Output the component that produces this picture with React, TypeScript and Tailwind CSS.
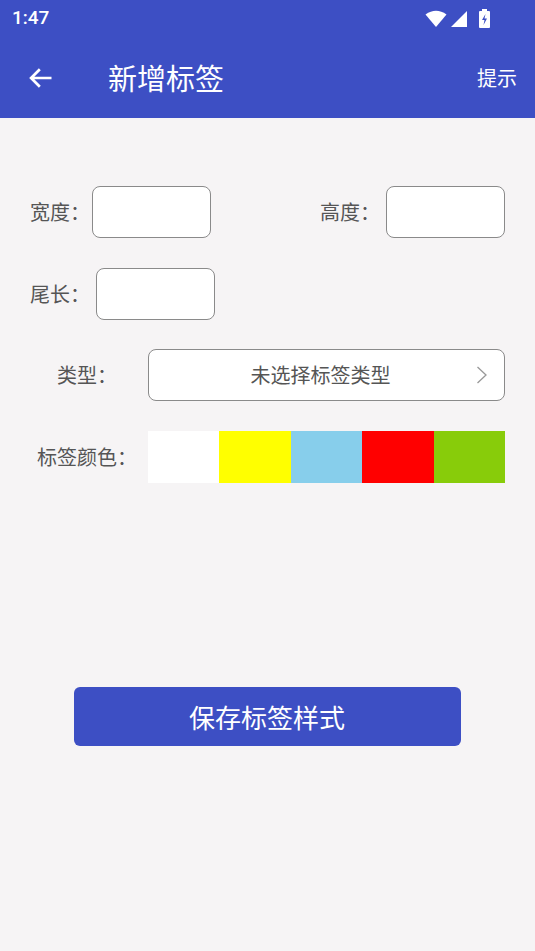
import React from "react";

const FONT = { fontFamily: '"Noto Sans CJK SC", "Noto Sans", Roboto, sans-serif' };

const swatches = ["#ffffff", "#ffff00", "#87ceeb", "#ff0000", "#88cc0a"];

function StatusBar() {
  return (
    <div className="h-[37px] flex items-center justify-between pl-[12px] pr-[40px]">
      <span className="text-white text-[19px] font-medium" style={{ fontFamily: "Roboto, sans-serif" }}>
        1:47
      </span>
      <div className="flex items-center gap-[3px]">
        <svg width="22" height="18" viewBox="0 0 22 18">
          <path d="M11 17 L0.5 4.5 Q11 -3 21.5 4.5 Z" fill="white" />
        </svg>
        <svg width="18" height="18" viewBox="0 0 18 18">
          <path d="M1 17 L17 17 L17 1 Z" fill="white" />
        </svg>
        <svg width="18" height="20" viewBox="0 0 18 20" className="ml-[6px]">
          <rect x="5" y="0" width="5" height="3" fill="white" />
          <rect x="2" y="2" width="11" height="17" rx="1" fill="white" />
          <path d="M8.5 5 L5 11 L7.5 11 L6.5 16 L10 9.5 L7.5 9.5 Z" fill="#3d4fc4" />
        </svg>
      </div>
    </div>
  );
}

function AppBar() {
  return (
    <div className="h-[81px] flex items-center pl-[27px] pr-[18px]">
      <svg width="28" height="28" viewBox="0 0 24 24" fill="none">
        <path d="M21 12 H3.5 M11 4.5 L3.5 12 L11 19.5" stroke="white" strokeWidth="2.3" />
      </svg>
      <span className="ml-[53px] text-white text-[29px] leading-none" style={FONT}>
        新增标签
      </span>
      <span className="ml-auto text-white text-[20px] leading-none" style={FONT}>
        提示
      </span>
    </div>
  );
}

function Box({ className = "" }: { className?: string }) {
  return <div className={"h-[52px] w-[119px] bg-white border border-[#8a8a8a] rounded-[8px] " + className} />;
}

export default function App() {
  return (
    <div className="w-[535px] h-[951px] bg-[#f6f4f5] flex flex-col" style={FONT}>
      <div className="bg-[#3d4fc4]">
        <StatusBar />
        <AppBar />
      </div>

      <div className="flex flex-col text-[20px] text-[#555555]">
        <div className="mt-[68px] flex items-center pl-[30px] pr-[30px]">
          <span>宽度：</span>
          <Box className="ml-[2px]" />
          <span className="ml-auto">高度：</span>
          <Box className="ml-[6px]" />
        </div>

        <div className="mt-[30px] flex items-center pl-[30px]">
          <span>尾长：</span>
          <Box className="ml-[6px]" />
        </div>

        <div className="mt-[29px] flex items-center pl-[28px] pr-[30px]">
          <span className="w-[120px] text-center pr-[2px]">类型：</span>
          <div className="flex-1 h-[52px] bg-white border border-[#8a8a8a] rounded-[8px] flex items-center relative">
            <span className="w-full text-center text-[20px] text-[#555555] pr-[12px]">未选择标签类型</span>
            <svg className="absolute right-[16px]" width="12" height="20" viewBox="0 0 12 20" fill="none">
              <path d="M1.5 2 L10 10 L1.5 18" stroke="#999999" strokeWidth="1.3" />
            </svg>
          </div>
        </div>

        <div className="mt-[30px] flex items-center pl-[28px] pr-[30px]">
          <span className="w-[120px] text-center pr-[2px]">标签颜色：</span>
          <div className="flex-1 h-[52px] flex">
            {swatches.map((c) => (
              <div key={c} className="flex-1" style={{ backgroundColor: c }} />
            ))}
          </div>
        </div>

        <div className="mt-[204px] flex justify-center pr-[1px]">
          <button className="w-[387px] h-[59px] bg-[#3d4fc4] rounded-[6px] text-white text-[26px]">
            保存标签样式
          </button>
        </div>
      </div>
    </div>
  );
}
